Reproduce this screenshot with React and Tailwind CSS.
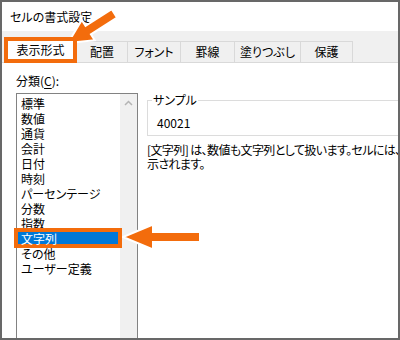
import React from "react";

const ORANGE = "#f36c0c";

const categories = [
  "標準",
  "数値",
  "通貨",
  "会計",
  "日付",
  "時刻",
  "パーセンテージ",
  "分数",
  "指数",
  "文字列",
  "その他",
  "ユーザー定義",
];

const tabs = [
  { label: "配置", w: "w-[51px]" },
  { label: "フォント", w: "w-[53px]" },
  { label: "罫線", w: "w-[54px]" },
  { label: "塗りつぶし", w: "w-[66px]" },
  { label: "保護", w: "w-[52px]" },
];

function Arrow({ x, y, angle, len, head, wing, shaft }) {
  const pts = [
    [0, 0],
    [-head, -wing],
    [-head, -shaft],
    [-len, -shaft],
    [-len, shaft],
    [-head, shaft],
    [-head, wing],
  ]
    .map((p) => p.join(","))
    .join(" ");
  return (
    <g transform={`translate(${x},${y}) rotate(${angle})`}>
      <polygon points={pts} fill={ORANGE} stroke="#ffffff" strokeWidth="2" strokeLinejoin="miter" />
    </g>
  );
}

export default function App() {
  return (
    <div className="relative w-[400px] h-[340px] overflow-hidden border-2 border-[#686868] bg-white text-[12px] text-black font-['Noto_Sans_CJK_JP',sans-serif] [font-feature-settings:'palt']">
      {/* title */}
      <div className="h-[29px] pl-[8px] pt-[7px] leading-[16px]">セルの書式設定</div>

      {/* tab strip */}
      <div className="h-[32px] bg-[#f0f0f0] border-b border-[#d9d9d9] flex items-end pl-[2px]">
        <div className="relative z-10 -mb-[1px] w-[73px] h-[26px] border-4 border-[#f36c0c] bg-white flex items-center justify-center leading-[14px]">
          表示形式
        </div>
        {tabs.map((t) => (
          <div
            key={t.label}
            className={`${t.w} h-[21px] border-t border-r border-[#d9d9d9] flex items-center justify-center leading-[14px]`}
          >
            {t.label}
          </div>
        ))}
      </div>

      {/* body */}
      <div className="flex">
        <div className="ml-[14px] w-[122px] shrink-0 pt-[10px]">
          <div className="leading-[16px]">
            分類(<span className="underline underline-offset-2">C</span>):
          </div>
          <div className="mt-[4px] h-[270px] border border-[#828282] flex">
            <div className="flex-1 pt-[2px]">
              {categories.map((c) => {
                const sel = c === "文字列";
                return (
                  <div key={c} className="relative h-[15px] leading-[15px] pl-[4px] whitespace-nowrap">
                    {sel && (
                      <div className="absolute z-10 top-[1px] left-[1px] right-[2px] h-[12px] bg-[#0078d7] outline-4 outline-[#f36c0c]" />
                    )}
                    <span className={sel ? "relative z-20 text-white" : ""}>{c}</span>
                  </div>
                );
              })}
            </div>
            <div className="w-[17px] bg-[#f0f0f0] flex justify-center pt-[6px]">
              <svg width="9" height="6" viewBox="0 0 9 6">
                <path d="M1 5 L4.5 1.5 L8 5" fill="none" stroke="#b4b4b4" strokeWidth="1.5" />
              </svg>
            </div>
          </div>
        </div>

        <div className="ml-[9px] pt-[37px] shrink-0">
          <div className="relative w-[300px] h-[36px] border border-[#dcdcdc] pl-[9px] pt-[14px] leading-[16px]">
            <span className="absolute -top-[9px] left-[4px] bg-white px-[1px] leading-[16px]">サンプル</span>
            40021
          </div>
          <div className="mt-[7px] leading-[14px] whitespace-nowrap tracking-[-0.6px]">
            <div>[文字列] は、数値も文字列として扱います。セルには、入力した値がそのまま表</div>
            <div>示されます。</div>
          </div>
        </div>
      </div>

      {/* annotation arrows */}
      <svg className="absolute -top-[2px] -left-[2px] pointer-events-none" width="400" height="340" viewBox="0 0 400 340">
        <Arrow x={68} y={43} angle={147.5} len={55} head={24} wing={12} shaft={5} />
        <Arrow x={123} y={237} angle={180} len={77} head={30} wing={12.5} shaft={5} />
      </svg>
    </div>
  );
}
